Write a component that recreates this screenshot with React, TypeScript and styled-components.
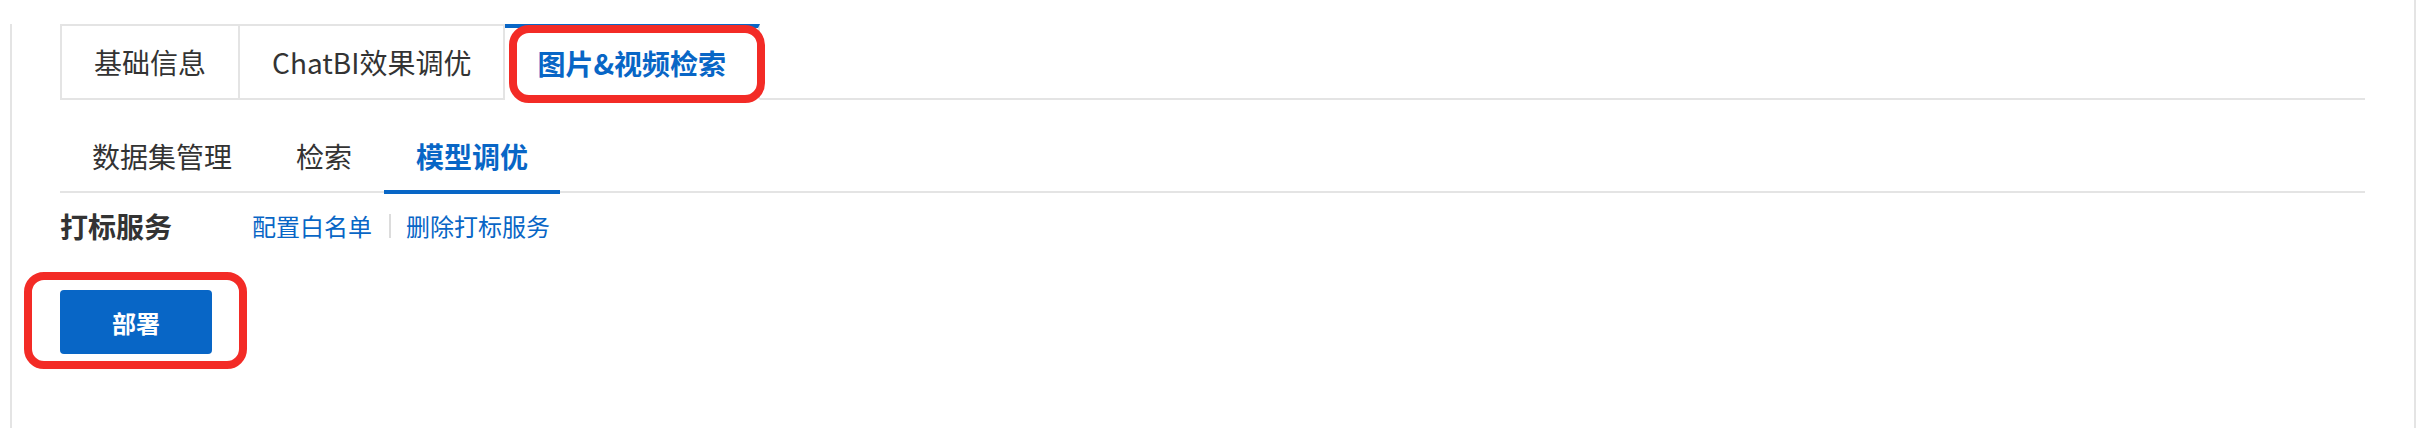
import React from "react";
import styled, { createGlobalStyle } from "styled-components";

const Global = createGlobalStyle`
  html, body { margin: 0; padding: 0; background: #ffffff; }
  body {
    font-family: "Noto Sans CJK SC", "Noto Sans", sans-serif;
    color: #333333;
  }
`;

const BLUE = "#0866c6";
const LINE = "#e4e4e4";
const RED = "#f32b26";

const Frame = styled.div`
  box-sizing: border-box;
  width: 2416px;
  height: 428px;
  padding: 24px 0 0 10px;
  border-right: 2px solid ${LINE};
  display: flex;
`;

const Panel = styled.div`
  flex: 1;
  box-sizing: border-box;
  border-left: 2px solid ${LINE};
  padding: 0 49px 0 48px;
  display: flex;
  flex-direction: column;
`;

const TabBar = styled.div`
  display: flex;
  align-items: stretch;
  height: 76px;
`;

const Tab = styled.div<{ $active?: boolean; $first?: boolean }>`
  position: relative;
  box-sizing: border-box;
  height: 76px;
  padding: 0 32px;
  display: flex;
  align-items: center;
  font-size: 28px;
  line-height: 36px;
  white-space: nowrap;
  background: #fff;
  color: ${(p) => (p.$active ? BLUE : "#333333")};
  font-weight: ${(p) => (p.$active ? 700 : 400)};
  border-top: ${(p) => (p.$active ? `4px solid ${BLUE}` : `2px solid ${LINE}`)};
  border-right: 2px solid ${LINE};
  border-left: ${(p) => (p.$first ? `2px solid ${LINE}` : "none")};
  border-bottom: 2px solid ${(p) => (p.$active ? "#ffffff" : LINE)};
`;

const TabFill = styled.div`
  flex: 1;
  border-bottom: 2px solid ${LINE};
`;

const Highlight = styled.div<{ $t: number; $r: number; $b: number; $l: number }>`
  position: absolute;
  top: ${(p) => p.$t}px;
  right: ${(p) => p.$r}px;
  bottom: ${(p) => p.$b}px;
  left: ${(p) => p.$l}px;
  border: 8px solid ${RED};
  border-radius: 20px;
  pointer-events: none;
`;

const SubBar = styled.div`
  display: flex;
  align-items: flex-start;
  height: 91px;
  border-bottom: 2px solid ${LINE};
`;

const SubTab = styled.div<{ $active?: boolean }>`
  box-sizing: border-box;
  padding: 38px 32px 16px;
  font-size: 28px;
  line-height: 36px;
  white-space: nowrap;
  color: ${(p) => (p.$active ? BLUE : "#333333")};
  font-weight: ${(p) => (p.$active ? 700 : 400)};
  border-bottom: 4px solid ${(p) => (p.$active ? BLUE : "transparent")};
`;

const ServiceRow = styled.div`
  display: flex;
  align-items: center;
  margin-top: 15px;
  height: 36px;
`;

const ServiceTitle = styled.div`
  font-size: 28px;
  line-height: 36px;
  font-weight: 700;
  color: #333333;
  margin-right: 80px;
  white-space: nowrap;
`;

const LinkText = styled.span`
  font-size: 24px;
  line-height: 32px;
  color: ${BLUE};
  white-space: nowrap;
`;

const Divider = styled.span`
  width: 2px;
  height: 24px;
  background: #dcdcdc;
  margin: 0 15px 0 17px;
`;

const ButtonWrap = styled.div`
  position: relative;
  margin-top: 46px;
  align-self: flex-start;
`;

const DeployButton = styled.button`
  box-sizing: border-box;
  width: 152px;
  height: 64px;
  border: none;
  border-radius: 4px;
  background: ${BLUE};
  color: #ffffff;
  font-family: "Noto Sans CJK SC", "Noto Sans", sans-serif;
  font-size: 24px;
  font-weight: 700;
  cursor: pointer;
  padding: 0;
`;

export default function App() {
  return (
    <>
      <Global />
      <Frame>
        <Panel>
          <TabBar>
            <Tab $first>基础信息</Tab>
            <Tab>ChatBI效果调优</Tab>
            <Tab $active>
              图片&amp;视频检索
              <Highlight $t={-3} $r={-7} $b={-5} $l={4} />
            </Tab>
            <TabFill />
          </TabBar>
          <SubBar>
            <SubTab>数据集管理</SubTab>
            <SubTab>检索</SubTab>
            <SubTab $active>模型调优</SubTab>
          </SubBar>
          <ServiceRow>
            <ServiceTitle>打标服务</ServiceTitle>
            <LinkText>配置白名单</LinkText>
            <Divider />
            <LinkText>删除打标服务</LinkText>
          </ServiceRow>
          <ButtonWrap>
            <DeployButton>部署</DeployButton>
            <Highlight $t={-18} $r={-35} $b={-15} $l={-36} />
          </ButtonWrap>
        </Panel>
      </Frame>
    </>
  );
}
